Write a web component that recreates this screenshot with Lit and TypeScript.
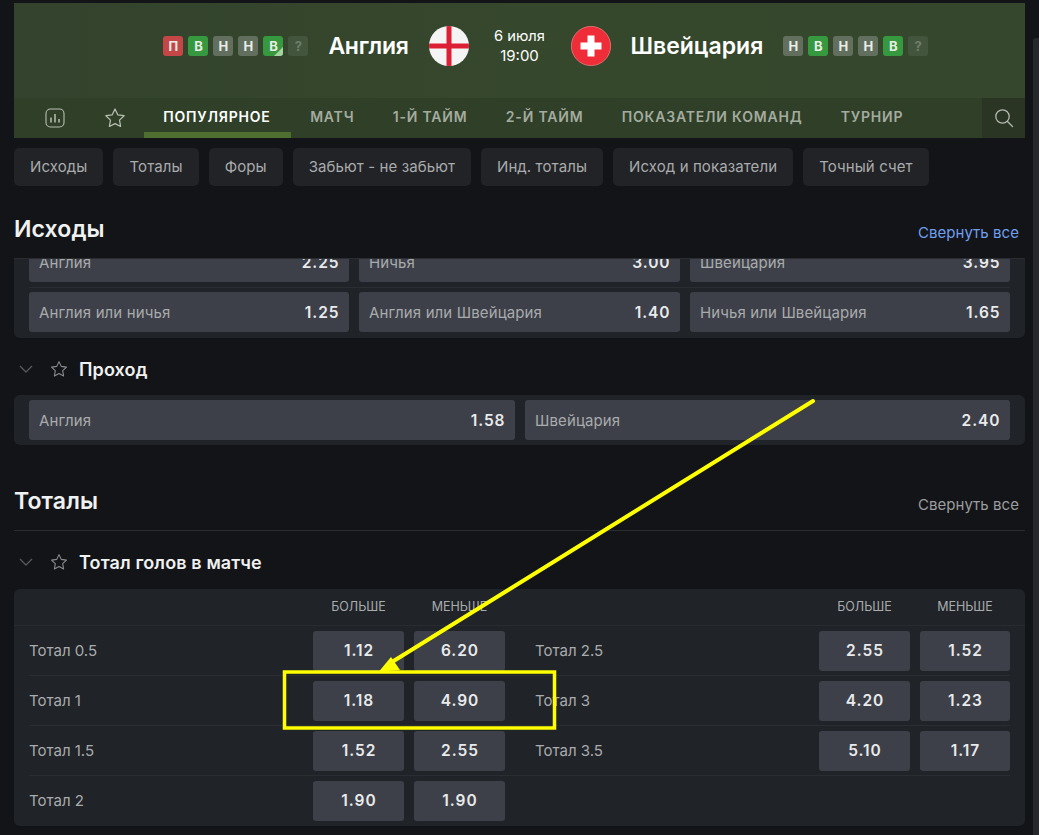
import { LitElement, html, css, svg } from "lit";
import { customElement } from "lit/decorators.js";

const star = (s: number) => html`<svg class="star" width=${s} height=${s} viewBox="0 0 20 20" fill="none" stroke="currentColor" stroke-width="1.2" stroke-linejoin="round"><path d="M10 1.8l2.5 5.3 5.8.8-4.2 4 1 5.8L10 15.1l-5.1 2.6 1-5.8-4.2-4 5.8-.8z"/></svg>`;
const chevron = html`<svg class="chev" width="16" height="16" viewBox="0 0 16 16" fill="none" stroke="currentColor" stroke-width="1.4"><path d="M2 5l6 6 6-6"/></svg>`;

const badges = (list: string[]) => html`<div class="badges">${list.map((b) => {
  const [l, half] = [b[0], b[1] === "+"];
  const cls = l === "П" ? "loss" : l === "В" ? "win" : l === "Н" ? "draw" : "unk";
  return html`<span class="badge ${cls} ${half ? "half" : ""}">${l}</span>`;
})}</div>`;

const odd = (n: string, v: string) => html`<div class="odd"><span class="n">${n}</span><span class="v">${v}</span></div>`;

const rows = [
  ["Тотал 0.5", "1.12", "6.20", "Тотал 2.5", "2.55", "1.52"],
  ["Тотал 1", "1.18", "4.90", "Тотал 3", "4.20", "1.23"],
  ["Тотал 1.5", "1.52", "2.55", "Тотал 3.5", "5.10", "1.17"],
  ["Тотал 2", "1.90", "1.90", "", "", ""],
];

@customElement("app-root")
export class AppRoot extends LitElement {
  static styles = css`
    :host { display: block; position: relative; height: 835px; overflow: hidden; background: #131417; font-family: Inter, "Noto Sans", sans-serif; color: #a9abad; }
    .page { padding: 3px 14px 0; width: 1011px; }
    .hero { height: 95px; background: linear-gradient(90deg, #33432d, #36482c 60%, #35472c); display: grid; grid-template-columns: 1fr 102px 1fr; align-items: center; padding-bottom: 10px; box-sizing: border-box; }
    .team { display: flex; align-items: center; gap: 20px; }
    .team.l { justify-content: flex-end; }
    .tname { font-size: 23px; font-weight: 600; color: #fff; letter-spacing: 0; }
    .team.l .tname { letter-spacing: -0.32px; }
    .flag { width: 40px; height: 40px; display: block; flex: none; }
    .when { text-align: center; color: #fff; font-size: 14.7px; line-height: 20px; }
    .when div:last-child { font-size: 15px; }
    .badges { display: flex; gap: 5px; }
    .badge { position: relative; overflow: hidden; width: 20px; height: 20px; border-radius: 3px; font-size: 13px; font-weight: 700; line-height: 20px; text-align: center; color: #e9ede6; }
    .loss { background: #c44646; }
    .win { background: #36983f; }
    .draw { background: #636f5e; }
    .unk { background: #43553d; color: #6f7e69; }
    .half::after { content: ""; position: absolute; right: 0; bottom: 0; border-style: solid; border-width: 0 0 9px 9px; border-color: transparent transparent #a5d3a0 transparent; }
    .nav { height: 40px; background: #2f3f28; display: flex; align-items: stretch; }
    .ico { display: flex; align-items: center; justify-content: center; color: #b9c0b2; box-sizing: border-box; }
    .ico.a { width: 82px; }
    .ico.b { width: 48px; padding-right: 11px; }
    .tabs { display: flex; flex: 1; }
    .tab { padding: 0 19.2px; font-size: 14px; font-weight: 600; letter-spacing: 0.8px; color: #a4ab9f; line-height: 38px; white-space: nowrap; box-sizing: border-box; }
    .tab.on { color: #fff; border-bottom: 6px solid #4f6f30; line-height: 38px; padding-right: 20.4px; }
    .search { width: 43px; background: #2a3524; display: flex; align-items: center; justify-content: center; color: #b3b8ae; }
    .chips { display: flex; gap: 10px; margin-top: 10px; }
    .chip { height: 38px; line-height: 38px; padding: 0 16px; background: #222326; border-radius: 5px; font-size: 15px; letter-spacing: 0.1px; color: #a9abad; white-space: nowrap; }
    .shead { display: flex; justify-content: space-between; align-items: center; }
    .shead h2 { margin: 0; font-size: 23px; font-weight: 600; color: #f0f1f1; letter-spacing: 0.1px; }
    .shead a { font-size: 15px; color: #9b9d9f; margin: 6px 6px 0 0; letter-spacing: 0.05px; }
    .shead a.blue { color: #6f9ff0; }
    .s1 { height: 73px; box-sizing: border-box; border-bottom: 1px solid #2a2c2f; }
    .s1 .shead { height: 86px; }
    .clip { height: 79px; overflow: hidden; background: #202328; border-radius: 0 0 6px 6px; }
    .clipin { margin-top: -17px; padding: 0 15px; }
    .tri { display: grid; grid-template-columns: 320px 321px 320px; gap: 0 10px; }
    .sep { height: 1px; background: #2a2d32; margin: 5px 0 4px; }
    .odd { height: 40px; background: #3d4048; border-radius: 3px; display: flex; justify-content: space-between; align-items: center; padding: 0 9.5px 0 10px; font-size: 15px; letter-spacing: 0.12px; color: #a9abad; }
    .odd .v, .btn { font-weight: 600; color: #e9eaeb; letter-spacing: 0.95px; font-size: 15.5px; }
    .mhead { display: flex; align-items: center; height: 26px; color: #55575a; }
    .chev { margin-left: 4px; flex: none; }
    .star { margin-left: 16px; flex: none; color: #8a8c8e; }
    .mhead b { margin-left: 11px; font-size: 18px; font-weight: 600; color: #f0f1f1; letter-spacing: 0.12px; }
    .m1 { margin-top: 18px; }
    .panel { background: #202328; border-radius: 6px; padding: 5px 15px; margin-top: 13px; }
    .duo { display: grid; grid-template-columns: 486px 485px; gap: 10px; }
    .s2 { margin-top: 41px; }
    .s2 .shead { height: 30px; padding-bottom: 14px; border-bottom: 1px solid #2a2c2f; }
    .m2 { margin-top: 18px; }
    .table { background: #202328; border-radius: 6px; margin-top: 14px; height: 237px; }
    .thead { border-bottom: 1px solid #282b30; display: grid; grid-template-columns: 476px 475px; gap: 30px; padding: 0 15px 2px; box-sizing: border-box; width: 1011px; height: 37px; }
    .half-col { display: grid; align-items: center; grid-template-columns: 1fr 91px 91px; gap: 10px; font-size: 12.5px; color: #a9abad; text-align: center; }
    .half-col.r { grid-template-columns: 1fr 91px 90px; }
    .row { height: 50px; box-sizing: border-box; margin: 0 15px; border-bottom: 1px solid #2a2d32; display: grid; grid-template-columns: 476px 475px; gap: 30px; width: 981px; }
    .row:last-child { border-bottom: 0; height: 49px; }
    .lab { font-size: 15px; text-align: left; color: #a9abad; }
    .btn { height: 40px; line-height: 40px; background: #3d4048; border-radius: 3px; text-align: center; padding-left: 1px; box-sizing: border-box; }
    .overlay { position: absolute; inset: 0; pointer-events: none; }
    .bar { position: absolute; right: 0; top: 38px; bottom: 0; width: 6px; background: #26282c; border-radius: 3px 0 0 0; }
  `;

  render() {
    return html`
      <div class="page">
        <div class="hero">
          <div class="team l">
            ${badges(["П", "В", "Н", "Н", "В+", "?"])}
            <span class="tname">Англия</span>
            <svg class="flag" viewBox="0 0 40 40"><defs><clipPath id="c"><circle cx="20" cy="20" r="20"/></clipPath></defs><g clip-path="url(#c)"><rect width="40" height="40" fill="#f4f4f4"/><rect x="17.5" width="5" height="40" fill="#dc1f35"/><rect y="17.5" width="40" height="5" fill="#dc1f35"/></g></svg>
          </div>
          <div class="when"><div>6 июля</div><div>19:00</div></div>
          <div class="team">
            <svg class="flag" viewBox="0 0 40 40"><circle cx="20" cy="20" r="19.6" fill="#ee2d38" stroke="#f27a80" stroke-width=".8"/><rect x="16.5" y="9.5" width="7" height="21" fill="#fff"/><rect x="9.5" y="16.5" width="21" height="7" fill="#fff"/></svg>
            <span class="tname">Швейцария</span>
            ${badges(["Н", "В", "Н", "Н", "В", "?"])}
          </div>
        </div>
        <div class="nav">
          <div class="ico a"><svg width="20" height="20" viewBox="0 0 20 20" fill="none" stroke="currentColor" stroke-width="1.1"><rect x="1" y="1" width="18" height="18" rx="4.5"/><path d="M6 9.5v5M10 6v8.500M14 11v3.500" stroke-width="1.500"/></svg></div>
          <div class="ico b"><svg width="22" height="22" viewBox="0 0 20 20" fill="none" stroke="currentColor" stroke-width="1.100" stroke-linejoin="round"><path d="M10 1.800l2.500 5.300 5.800.8-4.200 4 1 5.800L10 15.100l-5.100 2.600 1-5.800-4.200-4 5.800-.8z"/></svg></div>
          <div class="tabs">
            ${["ПОПУЛЯРНОЕ", "МАТЧ", "1-Й ТАЙМ", "2-Й ТАЙМ", "ПОКАЗАТЕЛИ КОМАНД", "ТУРНИР"].map((t, i) => html`<div class="tab ${i === 0 ? "on" : ""}">${t}</div>`)}
          </div>
          <div class="search"><svg width="20" height="20" viewBox="0 0 20 20" fill="none" stroke="currentColor" stroke-width="1.300"><circle cx="8.500" cy="8.500" r="6.700"/><path d="M13.500 13.500l5 5" stroke-linecap="round"/></svg></div>
        </div>
        <div class="chips">
          ${["Исходы", "Тоталы", "Форы", "Забьют - не забьют", "Инд. тоталы", "Исход и показатели", "Точный счет"].map((c) => html`<div class="chip">${c}</div>`)}
        </div>
        <div class="s1"><div class="shead"><h2>Исходы</h2><a class="blue">Свернуть все</a></div></div>
        <div class="clip"><div class="clipin">
          <div class="tri">${odd("Англия", "2.25")}${odd("Ничья", "3.00")}${odd("Швейцария", "3.95")}</div>
          <div class="sep"></div>
          <div class="tri">${odd("Англия или ничья", "1.25")}${odd("Англия или Швейцария", "1.40")}${odd("Ничья или Швейцария", "1.65")}</div>
        </div></div>
        <div class="mhead m1">${chevron}${star(18)}<b>Проход</b></div>
        <div class="panel"><div class="duo">${odd("Англия", "1.58")}${odd("Швейцария", "2.40")}</div></div>
        <div class="s2"><div class="shead"><h2>Тоталы</h2><a>Свернуть все</a></div></div>
        <div class="mhead m2">${chevron}${star(18)}<b>Тотал голов в матче</b></div>
        <div class="table">
          <div class="thead">
            <div class="half-col"><span></span><span>БОЛЬШЕ</span><span>МЕНЬШЕ</span></div>
            <div class="half-col r"><span></span><span>БОЛЬШЕ</span><span>МЕНЬШЕ</span></div>
          </div>
          ${rows.map((r) => html`<div class="row">
            <div class="half-col"><span class="lab">${r[0]}</span><div class="btn">${r[1]}</div><div class="btn">${r[2]}</div></div>
            ${r[3] ? html`<div class="half-col r"><span class="lab">${r[3]}</span><div class="btn">${r[4]}</div><div class="btn">${r[5]}</div></div>` : html`<div></div>`}
          </div>`)}
        </div>
      </div>
      <div class="bar"></div>
      <svg class="overlay" width="1039" height="835" viewBox="0 0 1039 835">
        ${svg`<rect x="284.500" y="672" width="270" height="56" fill="none" stroke="#ffff00" stroke-width="3.500"/>
        <path d="M813 401L392 662" stroke="#ffff00" stroke-width="4" stroke-linecap="round" fill="none"/>
        <path d="M379 671.500L391 657L400 670z" fill="#ffff00"/>`}
      </svg>
    `;
  }
}
